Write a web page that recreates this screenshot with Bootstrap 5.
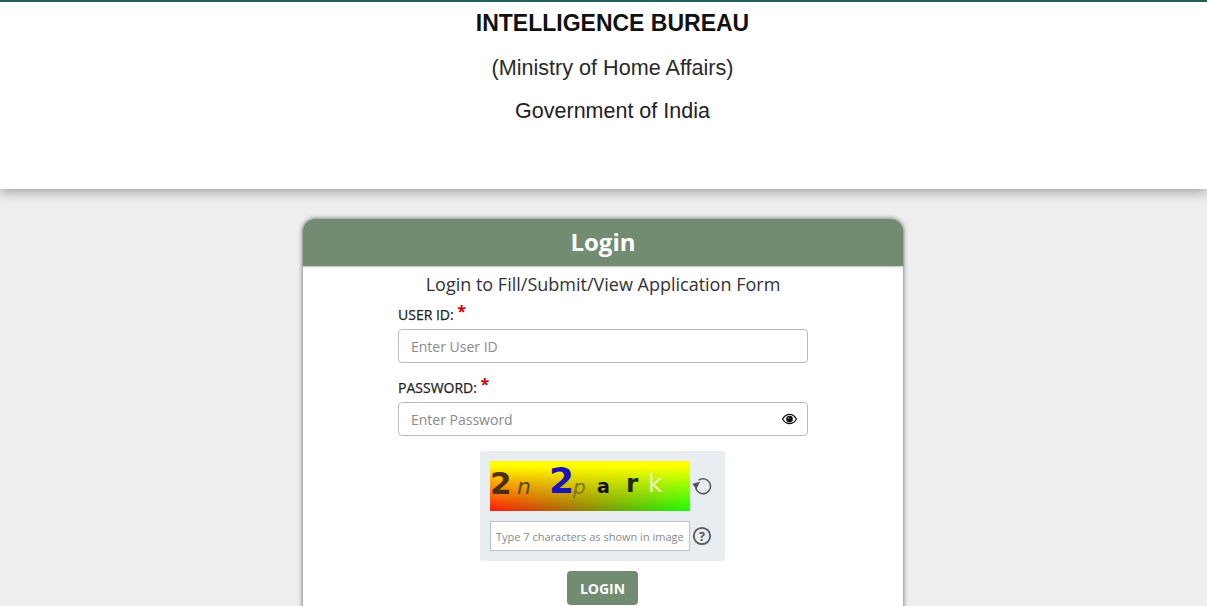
<!doctype html>
<html lang="en">
<head>
<meta charset="utf-8">
<title>Login</title>
<link href="https://cdn.jsdelivr.net/npm/bootstrap@5.3.0/dist/css/bootstrap.min.css" rel="stylesheet">
<style>
html,body{height:606px;overflow:hidden}
body{background:#eee;font-family:"Open Sans",sans-serif;color:#212529}
.ib-top{height:189px;background:#fff;border-top:2px solid #24605f;box-shadow:0 2px 12px rgba(0,0,0,.38);padding-left:18px;font-family:"Liberation Sans",sans-serif;color:#1a1a1a}
.ib-t1{font-size:23px;font-weight:700;line-height:26px;margin-top:8px;color:#111}
.ib-t2{font-size:21.600px;line-height:24px;margin-top:20px;color:#2a2a2a}
.ib-t3{font-size:21.500px;line-height:24px;margin-top:19px;color:#222}
.login-box{width:600px;margin:30px 0 0 303px;background:#fff;border-radius:12px 12px 0 0;box-shadow:0 0 5px rgba(0,0,0,.6);height:416px}
.login-head{background:#728c72;color:#fff;height:47px;border-radius:12px 12px 0 0;font-size:24px;font-weight:700;line-height:45px;text-align:center;box-shadow:0 1px 2px rgba(0,0,0,.25)}
.login-sub{font-size:18px;line-height:24px;margin-top:6px;text-align:center;color:#333}
.login-form{width:410px;margin:0 auto 0}
.fld-lab{font-size:14px;font-weight:500;-webkit-text-stroke:.25px #222;color:#222;line-height:18px;margin:0 0 5px;display:block}
.fld-first{margin-top:8px}
.fld-lab b{color:#c00;-webkit-text-stroke:0;font-size:16px;font-weight:700;line-height:14px;vertical-align:3px}
.fld-inp{height:34px;font-size:14px;border-radius:4px;border-color:#bbb;padding:0 12px;font-family:"Open Sans",sans-serif;color:#333}
.fld-inp::placeholder,.cap-inp::placeholder{color:#8a8a8a;opacity:1}
.fld-wrap{margin-bottom:14px}
.eye-ico{position:absolute;right:11px;top:11px;width:15px;height:12px}
.cap-box{width:245px;height:110px;background:#e7edf0;border-radius:3px;margin:15px 0 0 82px;padding:10px 0 0 10px}
.cap-img{width:200px;height:50px;display:block}
.cap-row2{margin-top:10px}
.cap-inp{width:200px;height:30px;border:1px solid #b9c4d4;font-size:11px;padding:0 5px;background:#fff;font-family:"Open Sans",sans-serif;display:block;outline:0}
.cap-ico{width:20px;height:20px;margin-left:2px}
.go-btn{background:#728c72;border:0;color:#fff;font-weight:700;font-size:14px;width:71px;height:34px;border-radius:4px;padding:0;display:block;margin:10px 0 0 169px}
</style>
</head>
<body>
<header class="ib-top text-center">
  <div class="ib-t1">INTELLIGENCE BUREAU</div>
  <div class="ib-t2">(Ministry of Home Affairs)</div>
  <div class="ib-t3">Government of India</div>
</header>
<main class="login-box">
  <div class="login-head">Login</div>
  <div class="login-sub">Login to Fill/Submit/View Application Form</div>
  <form class="login-form">
    <label class="fld-lab fld-first" for="uid">USER ID: <b>*</b></label>
    <div class="fld-wrap"><input id="uid" class="form-control fld-inp" placeholder="Enter User ID"></div>
    <label class="fld-lab" for="pwd">PASSWORD: <b>*</b></label>
    <div class="position-relative">
      <input id="pwd" class="form-control fld-inp" placeholder="Enter Password">
      <svg class="eye-ico" viewBox="0 0 16 12"><path d="M.6 6C2.5 2.7 5 1 8 1s5.500 1.700 7.400 5C13.500 9.300 11 11 8 11S2.500 9.300.6 6z" fill="#fff" stroke="#111" stroke-width="1.300"/><circle cx="8" cy="6" r="3.600" fill="#111"/><circle cx="6.800" cy="4.800" r="1" fill="#888"/></svg>
    </div>
    <div class="cap-box">
      <div class="d-flex align-items-center">
        <svg class="cap-img" viewBox="0 0 200 50">
          <defs>
            <linearGradient id="gh"><stop offset="0" stop-color="#f00"/><stop offset="1" stop-color="#0f0"/></linearGradient>
            <linearGradient id="gv" x2="0" y2="1"><stop offset="0" stop-color="#ff0"/><stop offset=".1" stop-color="#ff0"/><stop offset="1" stop-color="#ff0" stop-opacity="0"/></linearGradient>
            <filter id="spk" x="0" y="0" width="100%" height="100%"><feTurbulence type="fractalNoise" baseFrequency="1" numOctaves="2" seed="7"/><feColorMatrix values="0 0 0 0 .95  0 0 0 0 .85  0 0 0 0 .1  0 0 0 6 -2.900"/></filter>
            <linearGradient id="gm" x2="0" y2="1"><stop offset=".2" stop-color="#000"/><stop offset=".7" stop-color="#ccc"/></linearGradient>
            <mask id="mk"><rect width="200" height="50" fill="url(#gm)"/></mask>
          </defs>
          <rect width="200" height="50" fill="url(#gh)"/>
          <rect width="200" height="50" fill="url(#gv)"/>
          <rect width="200" height="50" filter="url(#spk)" mask="url(#mk)"/>
          <text x="0" y="33" font-family="DejaVu Sans" font-weight="700" font-size="31" fill="#4a3010">2</text>
          <text x="27" y="33" font-family="DejaVu Sans" font-style="italic" font-size="22" fill="#5a4a10">n</text>
          <text x="59" y="32" font-family="DejaVu Sans" font-weight="700" font-size="36" fill="#1b14b8">2</text>
          <text x="83" y="33" font-family="DejaVu Sans" font-style="italic" font-size="20" fill="#7a7a20">p</text>
          <text x="107" y="32" font-family="DejaVu Sans" font-weight="700" font-size="19" fill="#111">a</text>
          <text x="136" y="31" font-family="DejaVu Sans" font-weight="700" font-size="25" fill="#1e2a08">r</text>
          <text x="158" y="31" font-family="DejaVu Sans" font-size="25" fill="#e6f5c0">k</text>
        </svg>
        <svg class="cap-ico" viewBox="0 0 20 20" fill="none" stroke="#555" stroke-width="1.500"><path d="M6.500 4.200A7.500 7.500 0 1 1 3.700 12"/><path d="M.5 7.800L8 5.800L4.200 13.500z" fill="#555" stroke="none"/></svg>
      </div>
      <div class="d-flex align-items-center cap-row2">
        <input class="cap-inp" placeholder="Type 7 characters as shown in image">
        <svg class="cap-ico" viewBox="0 0 20 20" fill="none"><circle cx="10" cy="10" r="8.200" stroke="#555" stroke-width="1.800"/><text x="10" y="14.500" text-anchor="middle" font-family="Open Sans" font-weight="700" font-size="12.500" fill="#555">?</text></svg>
      </div>
    </div>
    <button type="button" class="go-btn">LOGIN</button>
  </form>
</main>
<script src="https://cdn.jsdelivr.net/npm/bootstrap@5.3.0/dist/js/bootstrap.bundle.min.js"></script>
</body>
</html>
